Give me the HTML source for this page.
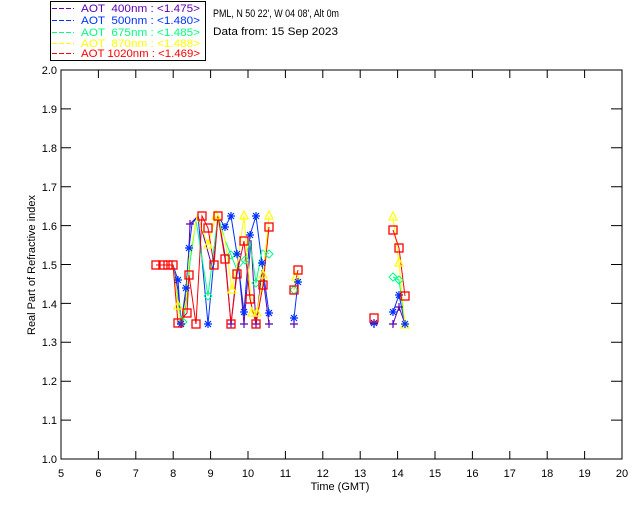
<!DOCTYPE html>
<html><head><meta charset="utf-8"><style>
html,body{margin:0;padding:0;background:#fff;width:640px;height:512px;overflow:hidden}
svg text{font-family:"Liberation Sans",sans-serif;font-size:11px;white-space:pre}
</style></head><body>
<svg width="640" height="512" xmlns="http://www.w3.org/2000/svg" xml:space="preserve">
<defs>
<symbol id="sq" overflow="visible"><rect x="-4" y="-4" width="8" height="8" fill="none" stroke="#f00" stroke-width="1.3"/></symbol>
<symbol id="tri" overflow="visible"><path d="M0,-5 L4,3 L-4,3 Z" fill="none" stroke="#ff0" stroke-width="1.2"/></symbol>
<symbol id="ast" overflow="visible"><path d="M-4,0H4M0,-4V4M-3,-3L3,3M-3,3L3,-3" stroke="#0030ff" stroke-width="1.2"/></symbol>
<symbol id="pl" overflow="visible"><path d="M-4,0H4M0,-4V4" stroke="#6000b0" stroke-width="1.2"/></symbol>
<symbol id="dia" overflow="visible"><path d="M0,-4L4,0L0,4L-4,0Z" fill="none" stroke="#00ff80" stroke-width="1"/></symbol>
</defs>
<rect x="50.5" y="1.5" width="155" height="59" fill="none" stroke="#000"/>
<g stroke-width="1">
<path d="M52,8.5h22" stroke="#6000b0" stroke-dasharray="5,2"/>
<path d="M52,20.5h22" stroke="#0030ff" stroke-dasharray="5,2"/>
<path d="M52,32.5h22" stroke="#00ff80" stroke-dasharray="5,2"/>
<path d="M52,43.5h22" stroke="#ffff00" stroke-dasharray="5,2"/>
<path d="M52,53.5h22" stroke="#ff0000" stroke-dasharray="5,2"/>
</g>
<text x="81" y="12" fill="#6000b0" textLength="119" lengthAdjust="spacingAndGlyphs">AOT  400nm : &lt;1.475&gt;</text>
<text x="81" y="24" fill="#0030ff" textLength="119" lengthAdjust="spacingAndGlyphs">AOT  500nm : &lt;1.480&gt;</text>
<text x="81" y="36" fill="#00ff80" textLength="119" lengthAdjust="spacingAndGlyphs">AOT  675nm : &lt;1.485&gt;</text>
<text x="81" y="47" fill="#ffff00" textLength="119" lengthAdjust="spacingAndGlyphs">AOT  870nm : &lt;1.488&gt;</text>
<text x="81" y="57" fill="#ff0000" textLength="119" lengthAdjust="spacingAndGlyphs">AOT 1020nm : &lt;1.469&gt;</text>
<text x="213" y="17" textLength="126" lengthAdjust="spacingAndGlyphs">PML, N 50 22', W 04 08', Alt 0m</text>
<text x="213" y="35" textLength="125" lengthAdjust="spacingAndGlyphs">Data from: 15 Sep 2023</text>
<rect x="61" y="70" width="561" height="389" fill="none" stroke="#000"/>
<g stroke="#000">
<path d="M98.4,459v-8M135.8,459v-8M173.2,459v-8M210.6,459v-8M248,459v-8M285.4,459v-8M322.8,459v-8M360.2,459v-8M397.6,459v-8M435,459v-8M472.4,459v-8M509.8,459v-8M547.2,459v-8M584.6,459v-8"/>
<path d="M98.4,70v8M135.8,70v8M173.2,70v8M210.6,70v8M248,70v8M285.4,70v8M322.8,70v8M360.2,70v8M397.6,70v8M435,70v8M472.4,70v8M509.8,70v8M547.2,70v8M584.6,70v8"/>
<path d="M61,108.9h10M61,147.8h10M61,186.7h10M61,225.6h10M61,264.5h10M61,303.4h10M61,342.3h10M61,381.2h10M61,420.1h10"/>
<path d="M622,108.9h-11M622,147.8h-11M622,186.7h-11M622,225.6h-11M622,264.5h-11M622,303.4h-11M622,342.3h-11M622,381.2h-11M622,420.1h-11"/>
</g>
<g text-anchor="end">
<text x="57" y="74" font-size="10">2.0</text><text x="57" y="113" font-size="10">1.9</text><text x="57" y="152" font-size="10">1.8</text><text x="57" y="191" font-size="10">1.7</text><text x="57" y="230" font-size="10">1.6</text><text x="57" y="269" font-size="10">1.5</text><text x="57" y="308" font-size="10">1.4</text><text x="57" y="346" font-size="10">1.3</text><text x="57" y="385" font-size="10">1.2</text><text x="57" y="424" font-size="10">1.1</text><text x="57" y="463" font-size="10">1.0</text>
</g>
<g text-anchor="middle">
<text x="61" y="477" font-size="10">5</text><text x="98.4" y="477" font-size="10">6</text><text x="135.8" y="477" font-size="10">7</text><text x="173.2" y="477" font-size="10">8</text><text x="210.6" y="477" font-size="10">9</text><text x="248" y="477" font-size="10">10</text><text x="285.4" y="477" font-size="10">11</text><text x="322.8" y="477" font-size="10">12</text><text x="360.2" y="477" font-size="10">13</text><text x="397.6" y="477" font-size="10">14</text><text x="435" y="477" font-size="10">15</text><text x="472.4" y="477" font-size="10">16</text><text x="509.8" y="477" font-size="10">17</text><text x="547.2" y="477" font-size="10">18</text><text x="584.6" y="477" font-size="10">19</text><text x="622" y="477" font-size="10">20</text>
<text x="340" y="490" font-size="10">Time (GMT)</text>
<text transform="translate(35,265) rotate(-90)" font-size="10">Real Part of Refractive index</text>
</g>
<g fill="none" stroke-width="1">
<polyline stroke="#6000b0" points="156,265 173,265 178,290 181,324 187,290 190,224 198,216 213,270 218,216 225,255 231,324 238,260 244,324 251,240 256,324 262,270 269,324"/>
<polyline stroke="#0030ff" points="156,265 173,265 178,280 181,324 186,288 189,248 192,224 198,216 208,324 218,216 225,227 231,216 237,254 244,312 250,235 256,216 262,263 269,313"/>
<polyline stroke="#00ff80" points="156,265 173,265 180,315 183,322 187,298 190,262 196,220 208,296 218,216 225,240 231,255 237,270 245,260 250,241 256,283 262,250 269,254"/>
<polyline stroke="#ffff00" points="156,265 173,265 178,306 181,324 186,300 189,260 197,216 208,245 216,216 225,240 232,290 238,260 244,216 252,313 257,313 263,275 269,216"/>
<polyline stroke="#ff0000" points="156,265 173,265 178,323 187,313 189,275 196,324 202,216 208,228 214,265 218,216 225,259 231,324 237,274 244,241 250,299 256,324 263,285 269,227"/>
<polyline stroke="#0030ff" points="294,318 298,282"/>
<polyline stroke="#ff0000" points="294,290 298,270"/>
<polyline stroke="#ffff00" points="294,290 296,277"/>
<polyline stroke="#6000b0" points="393,324 399,307 405,324"/>
<polyline stroke="#0030ff" points="393,312 399,295 405,324"/>
<polyline stroke="#00ff80" points="393,277 399,280 405,324"/>
<polyline stroke="#ffff00" points="393,217 399,263 405,325"/>
<polyline stroke="#ff0000" points="393,230 399,248 405,296"/>
</g>
<g>
<use href="#pl" x="181" y="324"/><use href="#pl" x="190" y="224"/><use href="#pl" x="231" y="324"/><use href="#pl" x="256" y="324"/><use href="#pl" x="269" y="324"/><use href="#pl" x="244" y="324"/><use href="#pl" x="294" y="324"/><use href="#pl" x="393" y="324"/><use href="#pl" x="399" y="307"/><use href="#pl" x="374" y="324"/>
<use href="#dia" x="183" y="322"/><use href="#dia" x="208" y="296"/><use href="#dia" x="231" y="255"/><use href="#dia" x="245" y="260"/><use href="#dia" x="256" y="283"/><use href="#dia" x="269" y="254"/><use href="#dia" x="294" y="290"/><use href="#dia" x="393" y="277"/><use href="#dia" x="399" y="280"/>
<use href="#tri" x="178" y="306"/><use href="#tri" x="208" y="245"/><use href="#tri" x="216" y="216"/><use href="#tri" x="232" y="290"/><use href="#tri" x="244" y="216"/><use href="#tri" x="252" y="313"/><use href="#tri" x="257" y="313"/><use href="#tri" x="263" y="275"/><use href="#tri" x="269" y="216"/><use href="#tri" x="296" y="277"/><use href="#tri" x="393" y="217"/><use href="#tri" x="399" y="263"/><use href="#tri" x="405" y="325"/>
<use href="#ast" x="178" y="280"/><use href="#ast" x="181" y="324"/><use href="#ast" x="186" y="288"/><use href="#ast" x="189" y="248"/><use href="#ast" x="208" y="324"/><use href="#ast" x="225" y="227"/><use href="#ast" x="231" y="216"/><use href="#ast" x="237" y="254"/><use href="#ast" x="244" y="312"/><use href="#ast" x="250" y="235"/><use href="#ast" x="256" y="216"/><use href="#ast" x="262" y="263"/><use href="#ast" x="269" y="313"/><use href="#ast" x="294" y="318"/><use href="#ast" x="298" y="282"/><use href="#ast" x="374" y="323"/><use href="#ast" x="393" y="312"/><use href="#ast" x="399" y="295"/><use href="#ast" x="405" y="324"/>
<use href="#sq" x="156" y="265"/><use href="#sq" x="163" y="265"/><use href="#sq" x="168" y="265"/><use href="#sq" x="173" y="265"/><use href="#sq" x="178" y="323"/><use href="#sq" x="187" y="313"/><use href="#sq" x="189" y="275"/><use href="#sq" x="196" y="324"/><use href="#sq" x="202" y="216"/><use href="#sq" x="208" y="228"/><use href="#sq" x="214" y="265"/><use href="#sq" x="218" y="216"/><use href="#sq" x="225" y="259"/><use href="#sq" x="231" y="324"/><use href="#sq" x="237" y="274"/><use href="#sq" x="244" y="241"/><use href="#sq" x="250" y="299"/><use href="#sq" x="256" y="324"/><use href="#sq" x="263" y="285"/><use href="#sq" x="269" y="227"/><use href="#sq" x="294" y="290"/><use href="#sq" x="298" y="270"/><use href="#sq" x="374" y="318"/><use href="#sq" x="393" y="230"/><use href="#sq" x="399" y="248"/><use href="#sq" x="405" y="296"/>
</g>
</svg>
</body></html>
